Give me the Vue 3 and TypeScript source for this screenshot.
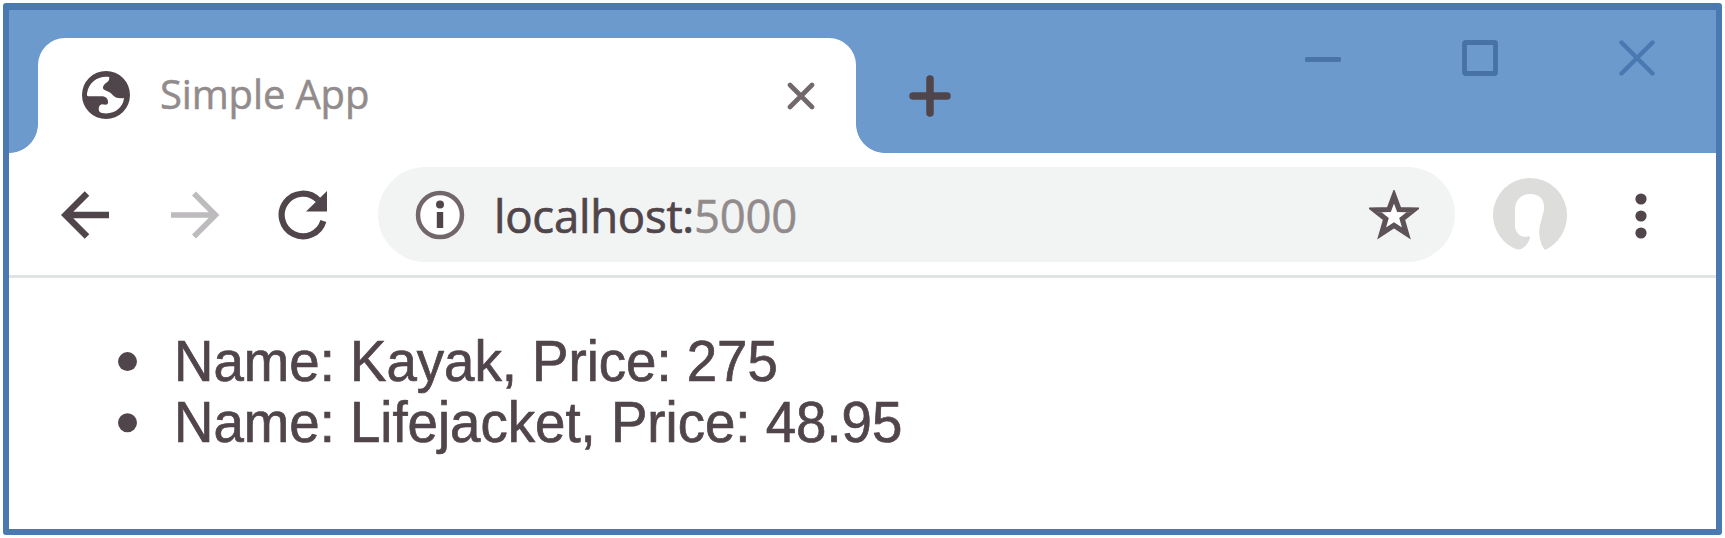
<script setup lang="ts">
interface Product {
  name: string
  price: number
}

const title = 'Simple App'
const host = 'localhost:'
const port = '5000'
const products: Product[] = [
  { name: 'Kayak', price: 275 },
  { name: 'Lifejacket', price: 48.95 },
]
</script>

<template>
  <div class="window">
    <header class="strip">
      <div class="tab">
        <svg class="globe" viewBox="0 0 24 24">
          <path
            fill="#50454b"
            fill-rule="evenodd"
            d="M12 0a12 12 0 1 0 0 24a12 12 0 0 0 0-24zM13.6 3C8 2.2 3.4 5.8 2.6 10.7C2.3 12 2.5 12.6 3.2 12.6H10.3C12.1 12.8 13.2 14 13 15.9C12.8 17.2 11.5 16.8 9.9 16.6C8.7 16.9 8.2 18 8.4 19.4C8.5 20.4 9 20.8 10 21C15.5 22.1 20.6 18.7 21 13.5C18.5 14 16.5 13.4 15.2 11.9C14.3 10.7 12.4 10.1 10.9 9.3C10 8.3 10.7 7 12 6C13 5.3 13.8 4.7 13.6 3z"
          />
        </svg>
        <span class="title">{{ title }}</span>
        <svg class="tab-close" viewBox="0 0 28 28">
          <path d="M3 3L25 25M25 3L3 25" fill="none" stroke="#71686b" stroke-width="4.6" stroke-linecap="round" />
        </svg>
      </div>
      <svg class="plus" viewBox="0 0 42 42">
        <path d="M21 4V38M4 21H38" fill="none" stroke="#50454b" stroke-width="7.5" stroke-linecap="round" />
      </svg>
      <div class="controls">
        <svg viewBox="0 0 36 36"><path d="M2 19.5H34" stroke="#4874a9" stroke-width="5" stroke-linecap="round" /></svg>
        <svg viewBox="0 0 36 36">
          <rect x="2.5" y="2.5" width="31" height="31" rx="1" fill="none" stroke="#4772a6" stroke-width="4.8" />
        </svg>
        <svg viewBox="0 0 36 36">
          <path d="M2.5 2.5L33.5 33.5M33.5 2.5L2.5 33.5" stroke="#4a79b1" stroke-width="4.4" stroke-linecap="round" />
        </svg>
      </div>
    </header>

    <nav class="toolbar">
      <svg class="icon back" viewBox="0 0 50 50">
        <path d="M26 3.5L4.5 25L26 46.5M5 25H48" fill="none" stroke="#50454b" stroke-width="6.4" />
      </svg>
      <svg class="icon forward" viewBox="0 0 50 50">
        <path d="M24 3.5L45.5 25L24 46.5M45 25H1" fill="none" stroke="#bdbbbd" stroke-width="5.5" />
      </svg>
      <svg class="icon reload" viewBox="0 0 50 50">
        <path d="M45.4 31A21.3 21.3 0 1 1 40.3 10.2" fill="none" stroke="#50454b" stroke-width="6.2" />
        <path d="M49 1V21.5H28z" fill="#50454b" />
      </svg>
      <div class="address">
        <svg class="icon info" viewBox="0 0 50 50">
          <circle cx="25" cy="25" r="22" fill="#fff" stroke="#71676b" stroke-width="4.5" />
          <circle cx="25" cy="14.4" r="4" fill="#50454b" />
          <path d="M25 22V38" stroke="#50454b" stroke-width="6.4" />
        </svg>
        <span class="url">{{ host }}<span class="port">{{ port }}</span></span>
        <svg class="icon star" viewBox="0 0 50 50">
          <path
            d="M25 6L30 19.5L44.5 20L33.2 29L37.4 43.5L25 35.4L12.6 43.5L16.8 29L5.5 20L20 19.5z"
            fill="#fff"
            stroke="#5d5257"
            stroke-width="5.2"
          />
        </svg>
      </div>
      <svg class="avatar" viewBox="0 0 76 76">
        <path
          fill="#dddddc"
          d="M24 72C28 74 35 70 38 61C38 59 36 59 34 60C28 60 24 56 23 50V33C23 23 29 17 38 17C48 17 53 23 52 33L48 48C46 57 48 67 53 73C66 67 75 54 75 38A37 37 0 1 0 1 38C1 53 11 67 24 72z"
        />
      </svg>
      <svg class="dots" viewBox="0 0 12 48">
        <circle v-for="y in [7, 24, 41]" :key="y" cx="6" :cy="y" r="5.6" fill="#50454b" />
      </svg>
    </nav>

    <main class="page">
      <ul>
        <li v-for="p in products" :key="p.name">
          <span class="bullet"></span>
          <span>Name: {{ p.name }}, Price: {{ p.price }}</span>
        </li>
      </ul>
    </main>
  </div>
</template>

<style>
body {
  margin: 0;
  background: #fdfefe;
}
</style>

<style scoped>
.window {
  box-sizing: border-box;
  width: 1719px;
  height: 532px;
  margin: 3px;
  border: 6px solid #4a79b1;
  border-top-width: 7px;
  border-radius: 3px;
  background: #fff;
  overflow: hidden;
}
svg {
  display: block;
  flex: none;
}
.strip {
  display: flex;
  height: 143px;
  background: #6c9acd;
}
.tab {
  position: relative;
  box-sizing: border-box;
  display: flex;
  align-items: center;
  width: 818px;
  height: 115px;
  margin: 28px 0 0 29px;
  padding: 0 41px 0 44px;
  border-radius: 27px 27px 0 0;
  background: #fff;
}
.tab::before,
.tab::after {
  content: '';
  position: absolute;
  bottom: 0;
  width: 29px;
  height: 29px;
}
.tab::before {
  left: -29px;
  background: radial-gradient(circle at 0 0, transparent 28.5px, #fff 29.3px);
}
.tab::after {
  right: -29px;
  background: radial-gradient(circle at 100% 0, transparent 28.5px, #fff 29.3px);
}
.globe {
  width: 48px;
  height: 48px;
  margin-bottom: 1px;
}
.title {
  flex: 1;
  margin: 0 0 3px 30px;
  font: 40px/54px 'Open Sans', 'Noto Sans', sans-serif;
  letter-spacing: -0.15px;
  color: #928b8c;
  -webkit-text-stroke: 0.5px #928b8c;
  white-space: nowrap;
}
.tab-close {
  width: 28px;
  height: 28px;
}
.plus {
  width: 42px;
  height: 42px;
  margin: 65px 0 0 53px;
}
.controls {
  display: flex;
  gap: 121px;
  margin: 30px 61px 0 auto;
}
.controls svg {
  width: 36px;
  height: 36px;
}
.toolbar {
  box-sizing: border-box;
  display: flex;
  align-items: center;
  height: 125px;
  padding: 1px 0 0 52px;
  border-bottom: 3px solid #dfe5e5;
}
.icon {
  width: 50px;
  height: 50px;
}
.forward {
  margin-left: 59px;
}
.reload {
  margin-left: 58px;
}
.address {
  box-sizing: border-box;
  display: flex;
  align-items: center;
  width: 1077px;
  height: 95px;
  margin-left: 50px;
  padding: 0 36px 0 37px;
  border-radius: 48px;
  background: #f2f4f4;
}
.url {
  flex: 1;
  margin-left: 29px;
  font: 45.5px/60px 'Open Sans', 'Noto Sans', sans-serif;
  letter-spacing: -0.25px;
  color: #50454b;
  -webkit-text-stroke: 0.7px #50454b;
  white-space: nowrap;
}
.port {
  color: #928b8c;
  -webkit-text-stroke: 0.5px #928b8c;
}
.avatar {
  width: 76px;
  height: 76px;
  margin-left: 37px;
}
.dots {
  width: 12px;
  height: 48px;
  margin: 2px 0 0 67px;
}
.page {
  padding: 53px 0 0 109px;
}
ul {
  margin: 0;
  padding: 0;
  list-style: none;
  font: 54.6px/58px 'Liberation Sans', Arial, sans-serif;
  color: #50454b;
  -webkit-text-stroke: 0.7px #50454b;
  transform: scaleY(1.055);
  transform-origin: 0 0;
}
li {
  display: flex;
  align-items: center;
  white-space: nowrap;
}
.bullet {
  width: 19px;
  height: 18px;
  margin: 0 37px 0 0;
  border-radius: 50%;
  background: #50454b;
}
</style>
